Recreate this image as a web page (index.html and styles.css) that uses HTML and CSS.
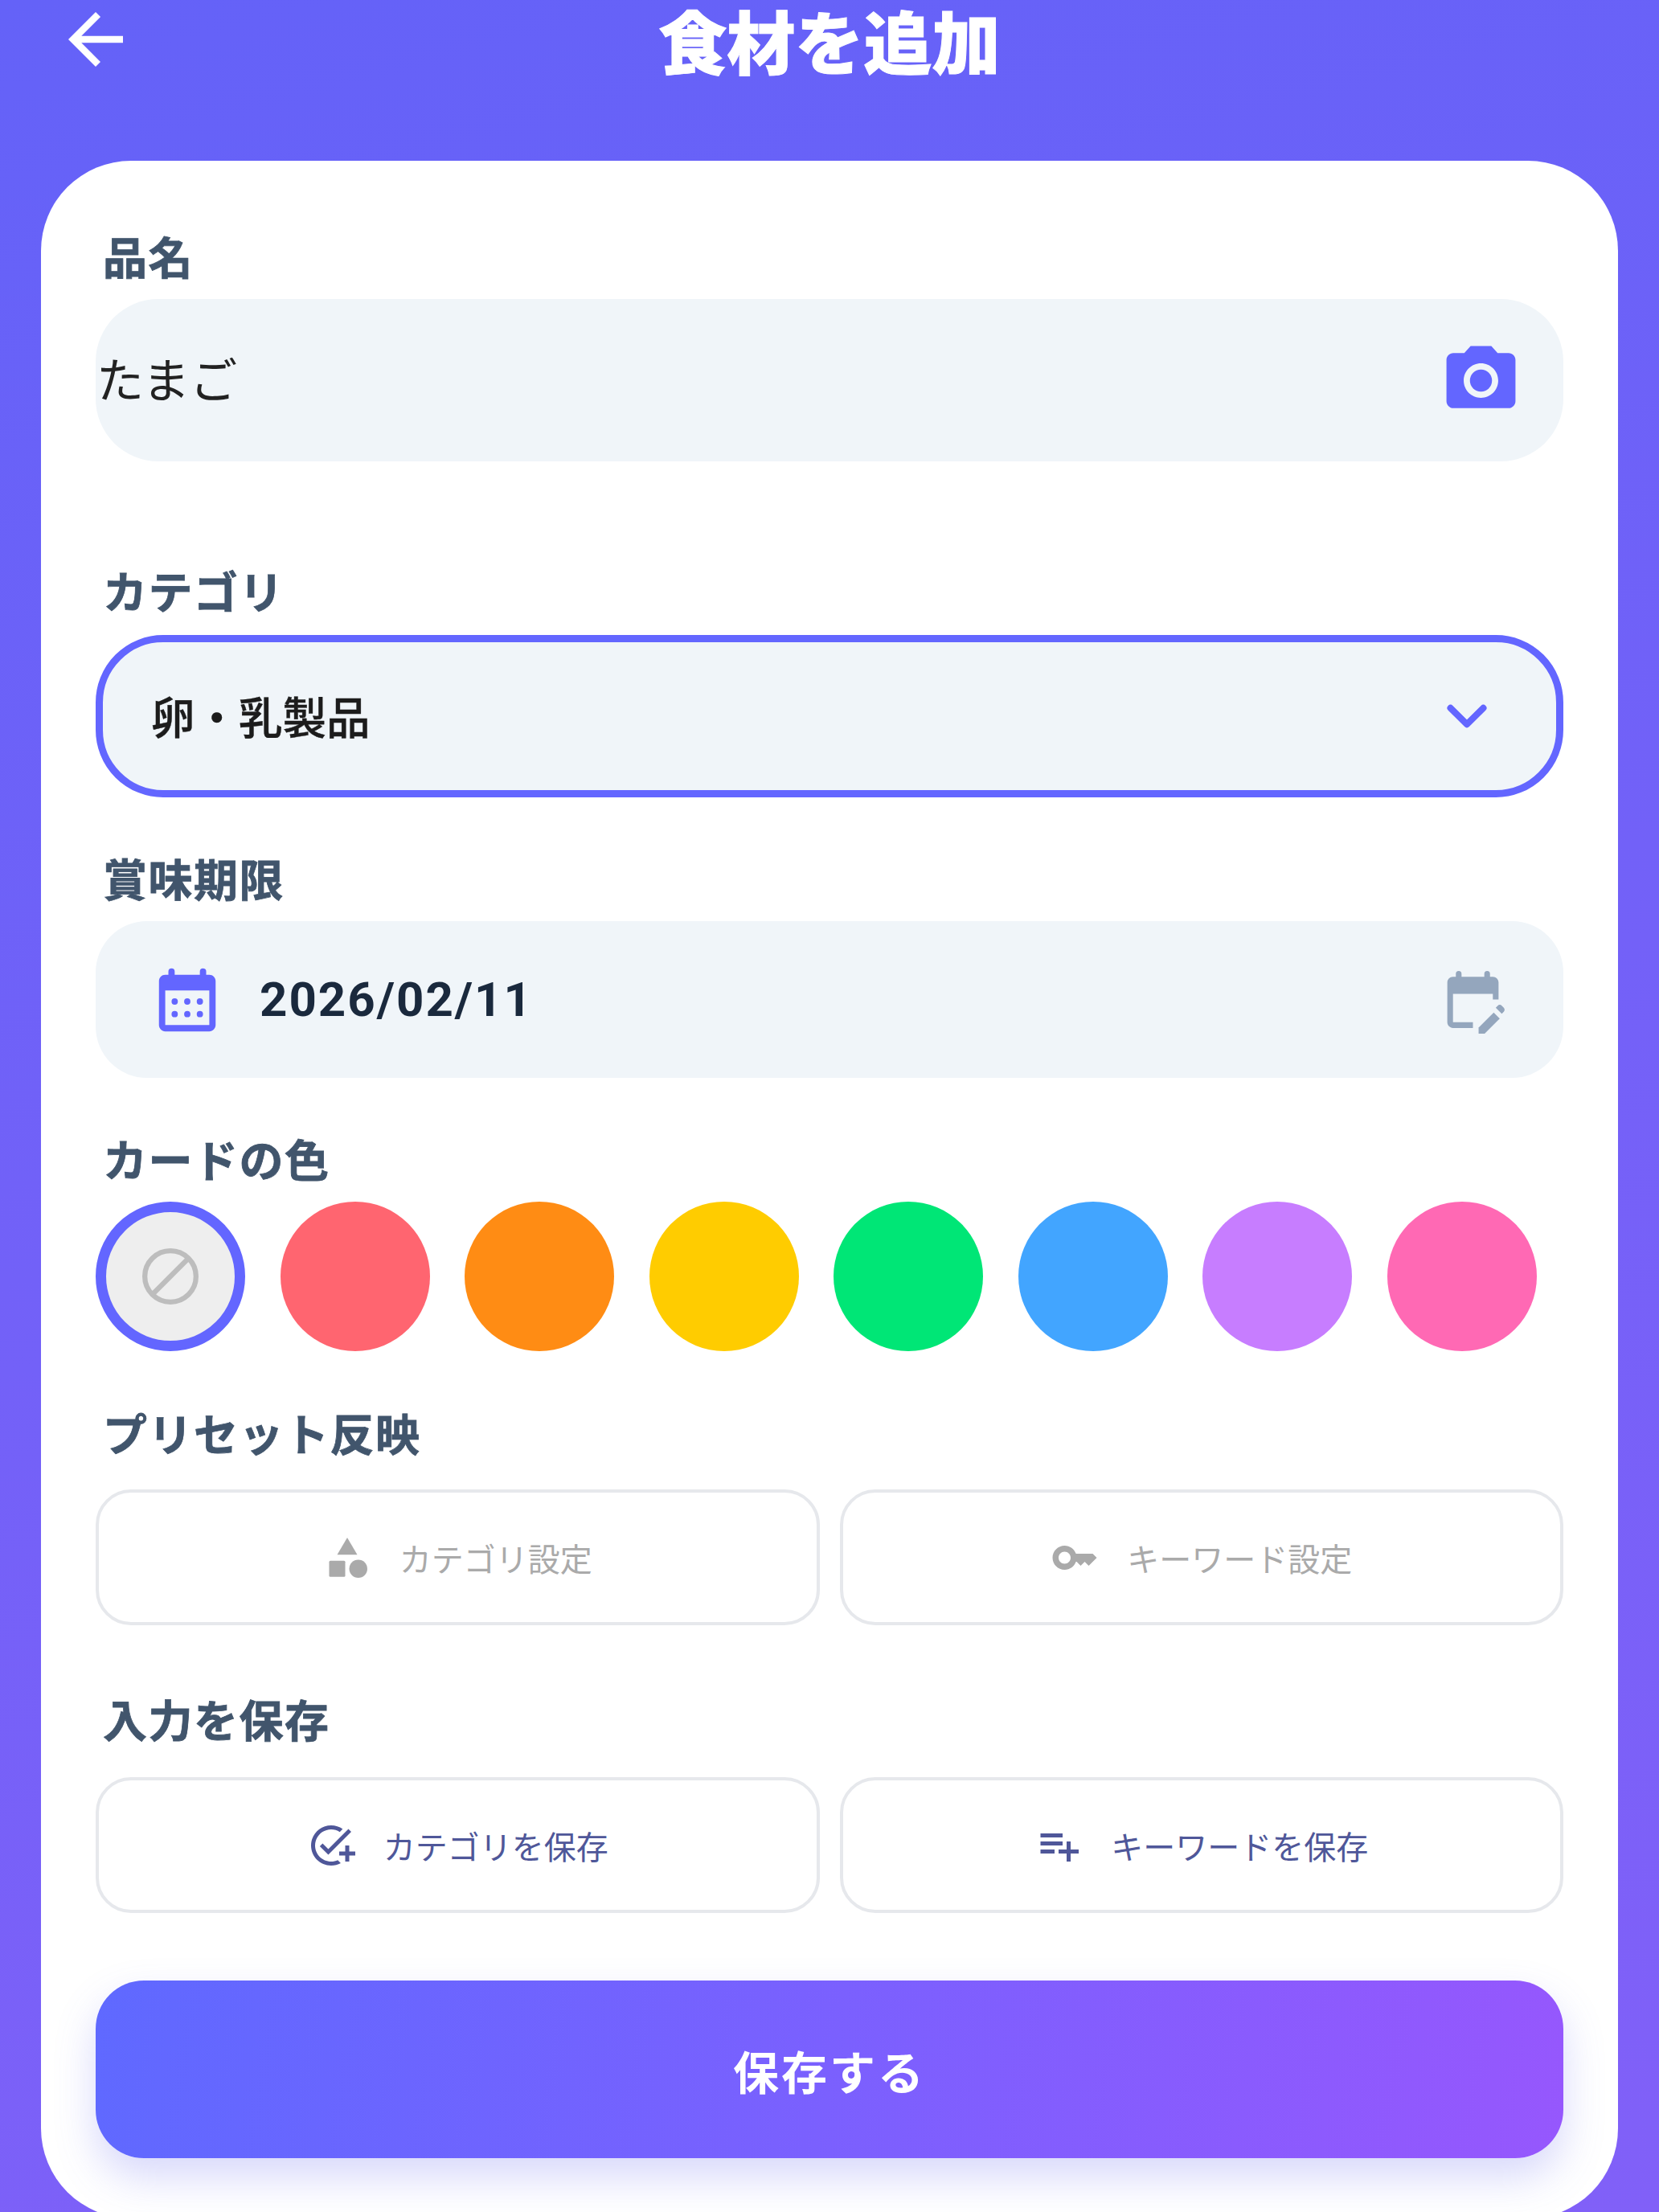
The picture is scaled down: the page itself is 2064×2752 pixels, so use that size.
FILE: index.html
```html
<!DOCTYPE html>
<html lang="ja">
<head>
<meta charset="utf-8">
<title>食材を追加</title>
<link rel="stylesheet" href="styles.css">
</head>
<body>
<div class="screen">
  <header class="topbar">
    <svg class="back" viewBox="0 0 24 24"><path d="M20 11H7.83l5.59-5.59L12 4l-8 8 8 8 1.41-1.41L7.83 13H20v-2z"/></svg>
    <h1 class="title">食材を追加</h1>
    <span class="topbar-spacer"></span>
  </header>
  <main class="card">
    <section class="sec sec-name">
      <div class="label">品名</div>
      <div class="field field-name">
        <span class="name-value">たまご</span>
        <svg class="camera" viewBox="0 0 24 24"><path d="M9 2L7.17 4H4c-1.1 0-2 .9-2 2v12c0 1.1.9 2 2 2h16c1.1 0 2-.9 2-2V6c0-1.1-.9-2-2-2h-3.17L15 2H9zm3 15c-2.76 0-5-2.24-5-5s2.24-5 5-5 5 2.24 5 5-2.24 5-5 5z"/><circle cx="12" cy="12" r="3.2"/></svg>
      </div>
    </section>
    <section class="sec sec-cat">
      <div class="label">カテゴリ</div>
      <div class="field field-select">
        <span class="select-value">卵・乳製品</span>
        <svg class="chevron" viewBox="0 0 24 24"><path d="M7 9.5l5 5 5-5"/></svg>
      </div>
    </section>
    <section class="sec sec-date">
      <div class="label">賞味期限</div>
      <div class="field field-date">
        <svg class="cal" viewBox="0 0 24 24"><path d="M19 4h-1V3a1 1 0 0 0-2 0v1H8V3a1 1 0 0 0-2 0v1H5c-1.11 0-1.99.9-1.99 2L3 20c0 1.1.89 2 2 2h14c1.1 0 2-.9 2-2V6c0-1.1-.9-2-2-2zm0 16H5V9h14v11z"/><circle cx="8" cy="12.5" r="1"/><circle cx="12" cy="12.5" r="1"/><circle cx="16" cy="12.5" r="1"/><circle cx="8" cy="16.5" r="1"/><circle cx="12" cy="16.5" r="1"/><circle cx="16" cy="16.5" r="1"/></svg>
        <span class="date-value">2026/02/11</span>
        <svg class="cal-edit" viewBox="0 0 24 24"><path d="M5 10h14v2h2V6c0-1.1-.9-2-2-2h-1V3a1 1 0 0 0-2 0v1H8V3a1 1 0 0 0-2 0v1H5C3.89 4 3.01 4.9 3.01 6L3 20c0 1.1.89 2 2 2h7v-2H5V10z"/><path d="M22.84 16.28l-.71.71-2.12-2.12.71-.71c.39-.39 1.02-.39 1.41 0l.71.71c.39.39.39 1.02 0 1.41z"/><path d="M14 21.88V24h2.12l5.3-5.3-2.12-2.12L14 21.88z"/></svg>
      </div>
    </section>
    <section class="sec sec-color">
      <div class="label">カードの色</div>
      <div class="swatches">
        <span class="swatch swatch-none"><svg class="none-icon" viewBox="0 0 24 24"><circle cx="12" cy="12" r="9.1"/><path d="M5.8 18.2L18.2 5.8"/></svg></span>
        <span class="swatch c-red"></span>
        <span class="swatch c-orange"></span>
        <span class="swatch c-yellow"></span>
        <span class="swatch c-green"></span>
        <span class="swatch c-blue"></span>
        <span class="swatch c-purple"></span>
        <span class="swatch c-pink"></span>
      </div>
    </section>
    <section class="sec sec-preset">
      <div class="label">プリセット反映</div>
      <div class="btn-row">
        <button class="btn btn-muted"><svg class="btn-icon" viewBox="0 0 24 24"><path d="M12 2l-5 8.5h10z"/><circle cx="17.5" cy="17.5" r="4.5"/><rect x="3" y="13.5" width="8" height="8" rx=".6"/></svg><span>カテゴリ設定</span></button>
        <button class="btn btn-muted"><svg class="btn-icon" viewBox="0 0 24 24"><path d="M21 10h-8.35C11.83 7.67 9.61 6 7 6c-3.31 0-6 2.69-6 6s2.69 6 6 6c2.61 0 4.83-1.67 5.65-4H13l2 2 2-2 2 2 4-4.04L21 10zM7 15c-1.65 0-3-1.35-3-3s1.35-3 3-3 3 1.35 3 3-1.35 3-3 3z"/></svg><span>キーワード設定</span></button>
      </div>
    </section>
    <section class="sec sec-store">
      <div class="label">入力を保存</div>
      <div class="btn-row">
        <button class="btn btn-accent"><svg class="btn-icon" viewBox="0 0 24 24"><path d="M22 5.18L10.59 16.6l-4.24-4.24 1.41-1.41 2.83 2.83 10-10L22 5.18zM12 20c-4.41 0-8-3.59-8-8s3.59-8 8-8c1.57 0 3.04.46 4.28 1.25l1.45-1.45C16.1 2.67 14.13 2 12 2 6.48 2 2 6.48 2 12s4.48 10 10 10c1.73 0 3.36-.44 4.78-1.22l-1.5-1.5C14.28 19.74 13.17 20 12 20zM19 15h-3v2h3v3h2v-3h3v-2h-3v-3h-2v3z"/></svg><span>カテゴリを保存</span></button>
        <button class="btn btn-accent"><svg class="btn-icon" viewBox="0 0 24 24"><path d="M14 10H3v2h11v-2zm0-4H3v2h11V6zm4 8v-4h-2v4h-4v2h4v4h2v-4h4v-2h-4zM3 16h7v-2H3v2z"/></svg><span>キーワードを保存</span></button>
      </div>
    </section>
    <button class="save">保存する</button>
  </main>
</div>
</body>
</html>
```
FILE: styles.css
```css
* { box-sizing: border-box; }
html, body { margin: 0; padding: 0; }
body { font-family: "Noto Sans CJK JP", "Noto Sans", sans-serif; }

.screen {
  width: 2064px;
  height: 2752px;
  overflow: hidden;
  background: linear-gradient(165deg, #6462f8 0%, #8160f8 100%);
}

.topbar {
  height: 200px;
  display: grid;
  grid-template-columns: 1fr auto 1fr;
  align-items: start;
}
.back { width: 102px; height: 102px; margin: -2px 0 0 68px; fill: #fff; }
.title {
  margin: 0;
  font-size: 85px;
  font-weight: 900;
  line-height: 97px;
  color: #fff;
  -webkit-text-stroke: 1px #fff;
}

.card {
  width: 1962px;
  height: 2560px;
  margin-left: 51px;
  padding: 91px 68px 0;
  background: #fff;
  border-radius: 112px;
}

.label {
  height: 60px;
  padding-left: 9px;
  font-size: 55px;
  font-weight: 700;
  line-height: 53px;
  letter-spacing: 1.5px;
  color: #41556c;
  -webkit-text-stroke: 0.8px #41556c;
}

.sec-cat { margin-top: 133px; }
.sec-date, .sec-color { margin-top: 73px; }
.sec-preset { margin-top: 74px; }
.sec-store { margin-top: 89px; }

.field {
  display: flex;
  align-items: center;
  background: #f0f5f9;
}
.field-name {
  height: 202px;
  margin-top: 21px;
  padding: 0 51px 0 1px;
  justify-content: space-between;
  border-radius: 78px;
}
.name-value { margin-top: -7px; font-size: 59px; font-weight: 400; color: #222; }
.camera { width: 103px; height: 103px; fill: #6366ff; }

.field-select {
  height: 202px;
  margin-top: 23px;
  padding: 0 62px 0 60px;
  justify-content: space-between;
  border: 9px solid #6366ff;
  border-radius: 84px;
}
.select-value { margin-top: -3px; font-size: 54.5px; font-weight: 500; color: #1c1c1c; -webkit-text-stroke: 0.4px #1c1c1c; }
.chevron { width: 98px; height: 98px; fill: none; stroke: #6366ff; stroke-width: 2; stroke-linecap: round; stroke-linejoin: round; }

.field-date {
  height: 195px;
  margin-top: 21px;
  padding: 0 70px 0 67px;
  border-radius: 64px;
}
.cal { width: 94px; height: 94px; fill: #6366ff; }
.date-value {
  margin-left: 43px;
  font-family: Roboto, "Noto Sans", sans-serif;
  font-size: 60px;
  font-weight: 700;
  letter-spacing: 2px;
  color: #1a293d;
}
.cal-edit { width: 85px; height: 85px; margin-left: auto; fill: #94a6bd; }

.swatches { display: flex; gap: 43.5px; margin-top: 21px; }
.swatch { width: 186px; height: 186px; border-radius: 50%; }
.swatch-none {
  display: flex;
  align-items: center;
  justify-content: center;
  background: #eee;
  border: 13px solid #6366ff;
}
.none-icon { width: 84px; height: 84px; fill: none; stroke: #bdbdbd; stroke-width: 1.8; }
.c-red { background: #ff6570; }
.c-orange { background: #ff8c14; }
.c-yellow { background: #ffcc00; }
.c-green { background: #00e676; }
.c-blue { background: #42a5ff; }
.c-purple { background: #c77dff; }
.c-pink { background: #ff69b4; }

.btn-row {
  display: grid;
  grid-template-columns: 1fr 1fr;
  gap: 25px;
}
.sec-preset .btn-row { margin-top: 38px; }
.sec-store .btn-row { margin-top: 40px; }

.btn {
  height: 169px;
  display: flex;
  align-items: center;
  justify-content: center;
  gap: 35px;
  padding: 0;
  background: #fff;
  border: 4px solid #e6e8ec;
  border-radius: 44px;
  font-family: inherit;
  font-size: 40px;
  font-weight: 400;
}
.btn-icon { width: 60px; height: 60px; flex: none; }
.btn-muted { color: #aaa; }
.btn-muted .btn-icon { fill: #aaa; }
.btn-accent { color: #4f5799; }
.btn-accent .btn-icon { fill: #4f5799; }

.save {
  display: block;
  width: 100%;
  height: 221px;
  margin-top: 84px;
  border: 0;
  border-radius: 60px;
  background: linear-gradient(100deg, #5f69ff 0%, #9657fd 100%);
  box-shadow: 0 24px 50px rgba(99, 102, 241, 0.25);
  color: #fff;
  font-family: inherit;
  font-size: 57px;
  font-weight: 700;
  letter-spacing: 3px;
}
```
